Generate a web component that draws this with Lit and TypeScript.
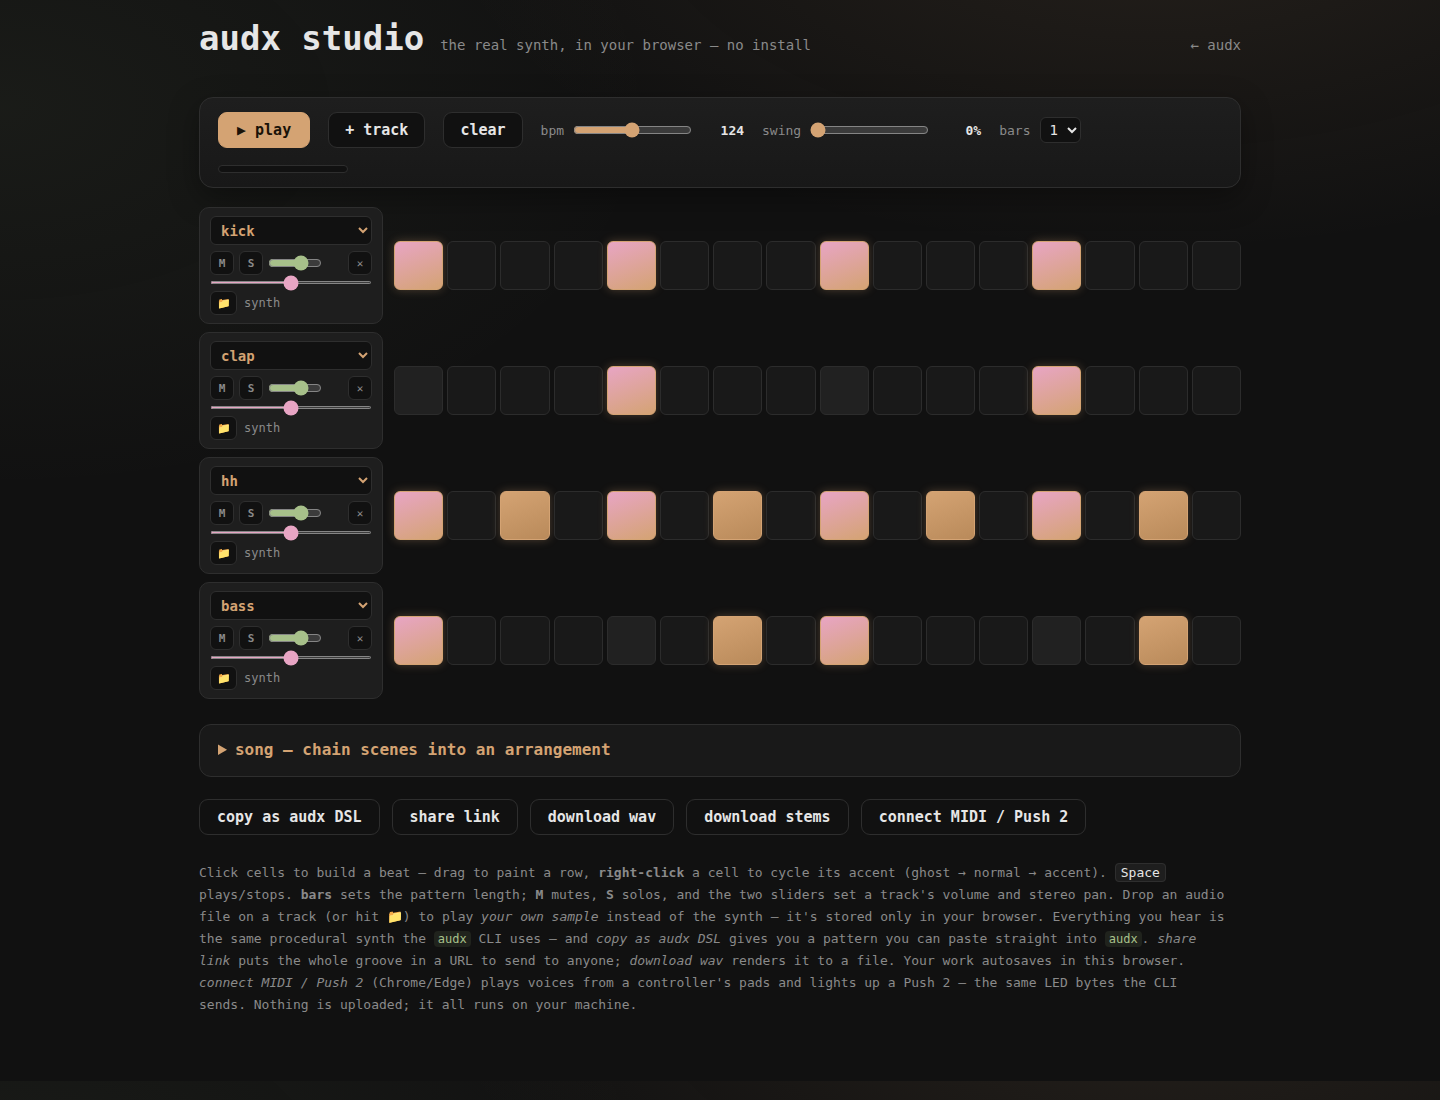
import { LitElement, html, css } from "lit";
import { customElement, property, state } from "lit/decorators.js";
import { classMap } from "lit/directives/class-map.js";

const VOICES = ["kick", "snare", "clap", "hh", "oh", "bass", "lead"];

interface Track {
  voice: string;
  // One digit per step: 0 off, 1 ghost, 2 normal, 3 accent.
  steps: number[];
}

const pattern = (s: string): number[] => [...s].map(Number);

const sharedStyles = css`
  *,
  *::before,
  *::after {
    box-sizing: border-box;
  }
  button,
  select,
  input {
    font-family: inherit;
  }
  button {
    cursor: pointer;
  }
  input {
    margin: 0;
    min-width: 0;
  }
`;

@customElement("track-row")
export class TrackRow extends LitElement {
  @property({ attribute: false }) track!: Track;
  @state() private muted = false;
  @state() private solo = false;

  static styles = [
    sharedStyles,
    css`
      :host {
        display: grid;
        grid-template-columns: 184px minmax(0, 1fr);
        gap: 11px;
        align-items: center;
      }
      .head {
        display: flex;
        flex-direction: column;
        padding: 8px 10px;
        border: 1px solid #2e2e2e;
        border-radius: 10px;
        background: #1e1e1e;
      }
      .voice {
        width: 100%;
        height: 29px;
        padding: 0 6px;
        border: 1px solid #2e2e2e;
        border-radius: 6px;
        background: #111;
        color: #d4a373;
        font-size: 14px;
        font-weight: 700;
      }
      .controls {
        display: flex;
        align-items: center;
        gap: 5px;
        margin-top: 6px;
      }
      .mini {
        width: 24px;
        height: 24px;
        padding: 0;
        border: 1px solid #2e2e2e;
        border-radius: 6px;
        background: #111;
        color: #8a8a8a;
        font-size: 11px;
        font-weight: 700;
      }
      .mini.on {
        color: #d4a373;
      }
      .remove {
        margin-left: auto;
        font-weight: 400;
      }
      .volume {
        width: 54px;
        accent-color: #a7c08a;
      }
      .pan {
        width: 100%;
        height: 3px;
        margin: 6px 0 7px;
        accent-color: #e8a5c4;
      }
      .source {
        display: flex;
        align-items: center;
        gap: 7px;
        color: #8a8a8a;
        font-size: 12px;
      }
      .source .mini {
        width: 27px;
      }
      .steps {
        display: grid;
        grid-template-columns: repeat(16, minmax(0, 1fr));
        gap: 4px;
      }
      .cell {
        aspect-ratio: 1;
        padding: 0;
        border: 1px solid #2c2c2c;
        border-radius: 6px;
        background: #191919;
      }
      .cell.beat {
        background: #212121;
      }
      .cell.ghost {
        background: #59462f;
      }
      .cell.normal {
        border-color: #d4a373;
        background: linear-gradient(160deg, #d4a373, #b98a5a);
        box-shadow: 0 0 10px rgba(212, 163, 115, 0.3);
      }
      .cell.accent {
        border-color: #d4a373;
        background: linear-gradient(160deg, #e8a5c4, #d4a373);
        box-shadow: 0 0 10px rgba(212, 163, 115, 0.3);
      }
    `,
  ];

  private setStep(index: number, level: number) {
    const steps = [...this.track.steps];
    steps[index] = level;
    this.track = { ...this.track, steps };
  }

  render() {
    const { voice, steps } = this.track;
    return html`
      <div class="head">
        <select class="voice" aria-label="voice">
          ${VOICES.map((v) => html`<option ?selected=${v === voice}>${v}</option>`)}
        </select>
        <div class="controls">
          <button
            class=${classMap({ mini: true, on: this.muted })}
            aria-pressed=${this.muted}
            @click=${() => (this.muted = !this.muted)}
          >M</button>
          <button
            class=${classMap({ mini: true, on: this.solo })}
            aria-pressed=${this.solo}
            @click=${() => (this.solo = !this.solo)}
          >S</button>
          <input class="volume" type="range" min="0" max="120" value="80" aria-label="volume" />
          <button class="mini remove" aria-label="remove track">✕</button>
        </div>
        <input class="pan" type="range" min="-100" max="100" value="0" aria-label="pan" />
        <div class="source">
          <button class="mini" aria-label="load sample">📁</button>
          <span>synth</span>
        </div>
      </div>
      <div class="steps">
        ${steps.map(
          (level, i) => html`<button
            class=${classMap({
              cell: true,
              beat: i % 4 === 0 && level === 0,
              ghost: level === 1,
              normal: level === 2,
              accent: level === 3,
            })}
            aria-label=${`step ${i + 1}`}
            @click=${() => this.setStep(i, level ? 0 : 2)}
            @contextmenu=${(e: Event) => {
              e.preventDefault();
              this.setStep(i, (level % 3) + 1);
            }}
          ></button>`
        )}
      </div>
    `;
  }
}

@customElement("app-root")
export class AppRoot extends LitElement {
  @state() private bpm = 124;
  @state() private swing = 0;
  @state() private playing = false;

  private tracks: Track[] = [
    { voice: "kick", steps: pattern("3000300030003000") },
    { voice: "clap", steps: pattern("0000300000003000") },
    { voice: "hh", steps: pattern("3020302030203020") },
    { voice: "bass", steps: pattern("3000002030000020") },
  ];

  static styles = [
    sharedStyles,
    css`
      :host {
        display: block;
        min-height: 100vh;
        color-scheme: dark;
        color: #e6e6e6;
        font-family: "DejaVu Sans Mono", monospace;
        font-size: 16px;
        background:
          radial-gradient(1200px 600px at 80% -10%, rgba(212, 163, 115, 0.1), transparent 60%) 0 0 / 100% 1081px,
          radial-gradient(1100px 640px at 0% 10%, rgba(167, 192, 138, 0.06), transparent 60%) 0 0 / 100% 1081px,
          #111;
      }
      main {
        max-width: 1082px;
        margin: 0 auto;
        padding: 18px 20px 64px;
      }
      header {
        display: flex;
        align-items: baseline;
        gap: 16px;
        margin-bottom: 39px;
        color: #8a8a8a;
        font-size: 14px;
      }
      h1 {
        margin: 0;
        color: #e6e6e6;
        font-size: 34px;
        line-height: 40px;
      }
      .tagline {
        margin: 0;
      }
      .home {
        margin-left: auto;
        color: inherit;
        text-decoration: none;
      }
      .transport {
        display: flex;
        flex-direction: column;
        gap: 17px;
        padding: 14px 18px;
        border: 1px solid #2e2e2e;
        border-radius: 14px;
        background: linear-gradient(180deg, #1e1e1e, #181818);
        box-shadow: 0 10px 30px rgba(0, 0, 0, 0.35);
      }
      .row {
        display: flex;
        flex-wrap: wrap;
        align-items: center;
        gap: 18px;
      }
      .btn {
        height: 36px;
        padding: 0 16px;
        border: 1px solid #2e2e2e;
        border-radius: 9px;
        background: #111;
        color: #e6e6e6;
        font-size: 15px;
        font-weight: 700;
      }
      .btn.primary {
        padding: 0 18px;
        border-color: #d4a373;
        background: #d4a373;
        color: #1a1208;
      }
      .field {
        display: flex;
        align-items: center;
        gap: 9px;
        color: #8a8a8a;
        font-size: 13px;
      }
      .field input {
        width: 119px;
        accent-color: #d4a373;
      }
      .field output {
        width: 43px;
        color: #e6e6e6;
        font-weight: 700;
        text-align: right;
      }
      .field select {
        height: 26px;
        padding: 0 5px;
        border: 1px solid #2e2e2e;
        border-radius: 6px;
        background: #111;
        color: #e6e6e6;
        font-size: 14px;
      }
      .meter {
        width: 130px;
        height: 8px;
        border: 1px solid #2e2e2e;
        border-radius: 4px;
        background: #111;
      }
      .tracks {
        display: flex;
        flex-direction: column;
        gap: 8px;
        margin: 19px 0 25px;
      }
      .song {
        padding: 15px 18px 17px;
        border: 1px solid #2e2e2e;
        border-radius: 12px;
        background: #191919;
      }
      .song summary {
        color: #d4a373;
        font-weight: 700;
        line-height: 19px;
        cursor: pointer;
      }
      .actions {
        display: flex;
        flex-wrap: wrap;
        gap: 12px;
        margin: 22px 0 27px;
      }
      .actions .btn {
        padding: 0 17px;
      }
      .help {
        margin: 0;
        padding-right: 12px;
        color: #8a8a8a;
        font-size: 13px;
        line-height: 22px;
      }
      kbd,
      code {
        font-family: inherit;
        border-radius: 4px;
      }
      kbd {
        padding: 1px 5px;
        border: 1px solid #2e2e2e;
        background: #1e1e1e;
        color: #e6e6e6;
      }
      code {
        padding: 1px 4px;
        background: rgba(167, 192, 138, 0.1);
        color: #a7c08a;
        font-size: 12px;
      }
    `,
  ];

  render() {
    return html`
      <main>
        <header>
          <h1>audx studio</h1>
          <p class="tagline">the real synth, in your browser — no install</p>
          <a class="home" href="#">← audx</a>
        </header>

        <section class="transport" aria-label="transport">
          <div class="row">
            <button class="btn primary" @click=${() => (this.playing = !this.playing)}>
              ${this.playing ? "■ stop" : "▶ play"}
            </button>
            <button class="btn">+ track</button>
            <button class="btn">clear</button>
            <label class="field">
              bpm
              <input
                type="range"
                min="60"
                max="190"
                .value=${String(this.bpm)}
                @input=${(e: Event) => (this.bpm = +(e.target as HTMLInputElement).value)}
              />
              <output>${this.bpm}</output>
            </label>
            <label class="field">
              swing
              <input
                type="range"
                min="0"
                max="60"
                .value=${String(this.swing)}
                @input=${(e: Event) => (this.swing = +(e.target as HTMLInputElement).value)}
              />
              <output>${this.swing}%</output>
            </label>
            <label class="field">
              bars
              <select>
                <option>1</option>
                <option>2</option>
                <option>4</option>
              </select>
            </label>
          </div>
          <div class="meter"></div>
        </section>

        <section class="tracks" aria-label="tracks">
          ${this.tracks.map((t) => html`<track-row .track=${t}></track-row>`)}
        </section>

        <details class="song">
          <summary>song — chain scenes into an arrangement</summary>
        </details>

        <div class="actions">
          <button class="btn">copy as audx DSL</button>
          <button class="btn">share link</button>
          <button class="btn">download wav</button>
          <button class="btn">download stems</button>
          <button class="btn">connect MIDI / Push 2</button>
        </div>

        <p class="help">
          Click cells to build a beat — drag to paint a row, <b>right-click</b> a cell to cycle its
          accent (ghost → normal → accent). <kbd>Space</kbd> plays/stops. <b>bars</b> sets the
          pattern length; <b>M</b> mutes, <b>S</b> solos, and the two sliders set a track's volume
          and stereo pan. Drop an audio file on a track (or hit 📁) to play
          <em>your own sample</em> instead of the synth — it's stored only in your browser.
          Everything you hear is the same procedural synth the <code>audx</code> CLI uses — and
          <em>copy as audx DSL</em> gives you a pattern you can paste straight into
          <code>audx</code>. <em>share link</em> puts the whole groove in a URL to send to anyone;
          <em>download wav</em> renders it to a file. Your work autosaves in this browser.
          <em>connect MIDI / Push 2</em> (Chrome/Edge) plays voices from a controller's pads and
          lights up a Push 2 — the same LED bytes the CLI sends. Nothing is uploaded; it all runs on
          your machine.
        </p>
      </main>
    `;
  }
}
